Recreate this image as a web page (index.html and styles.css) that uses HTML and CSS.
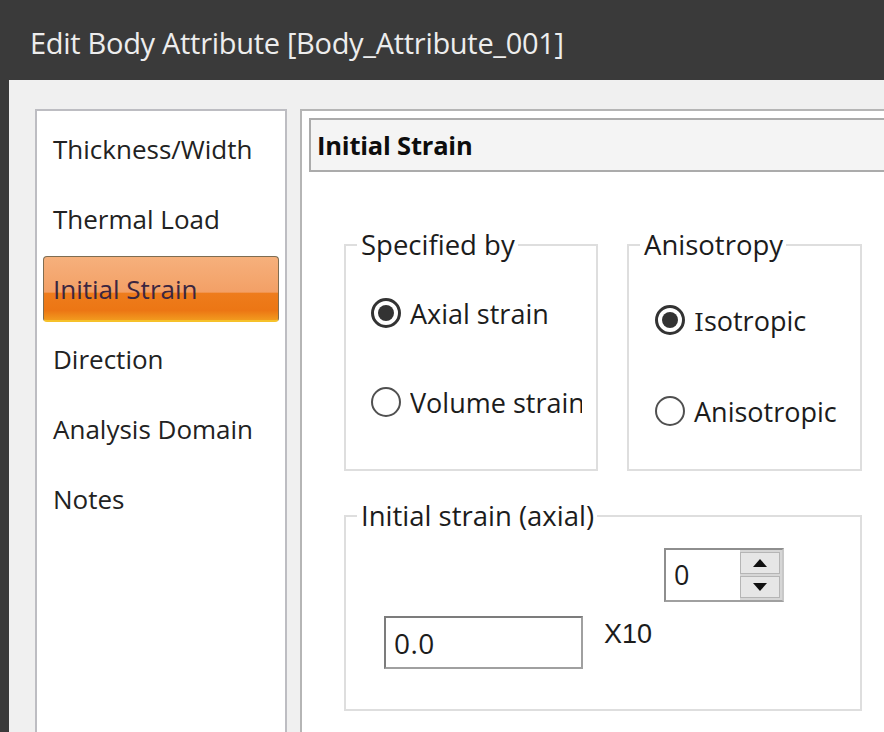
FILE: index.html
```html
<!DOCTYPE html>
<html lang="en">
<head>
<meta charset="utf-8">
<title>Edit Body Attribute</title>
<link rel="stylesheet" href="styles.css">
</head>
<body>
<div class="window">
  <div class="titlebar">Edit Body Attribute [Body_Attribute_001]</div>
  <div class="client">
    <ul class="nav">
      <li class="nav-item">Thickness/Width</li>
      <li class="nav-item">Thermal Load</li>
      <li class="nav-item is-active">Initial Strain</li>
      <li class="nav-item">Direction</li>
      <li class="nav-item">Analysis Domain</li>
      <li class="nav-item">Notes</li>
    </ul>
    <section class="page">
      <header class="page-head">Initial Strain</header>
      <div class="page-body">
        <div class="group-row">
          <fieldset class="group group-spec">
            <legend>Specified by</legend>
            <div class="options options-spec">
              <label class="option"><input type="radio" name="spec" checked><span class="option-text">Axial strain</span></label>
              <label class="option"><input type="radio" name="spec"><span class="option-text clip">Volume strain</span></label>
            </div>
          </fieldset>
          <fieldset class="group group-aniso">
            <legend>Anisotropy</legend>
            <div class="options options-aniso">
              <label class="option"><input type="radio" name="aniso" checked><span class="option-text"><span class="serif-i">I</span>sotropic</span></label>
              <label class="option"><input type="radio" name="aniso"><span class="option-text">Anisotropic</span></label>
            </div>
          </fieldset>
        </div>
        <fieldset class="group group-value">
          <legend>Initial strain (axial)</legend>
          <div class="value-body">
            <div class="spin">
              <span class="spin-field">0</span>
              <span class="spin-buttons">
                <span class="spin-btn"><svg width="16" height="9" viewBox="0 0 16 9"><polygon points="8,0 16,9 0,9" fill="#111"/></svg></span>
                <span class="spin-btn"><svg width="16" height="9" viewBox="0 0 16 9"><polygon points="0,0 16,0 8,9" fill="#111"/></svg></span>
              </span>
            </div>
            <div class="value-row">
              <span class="text-field">0.0</span>
              <span class="exp-label">X10</span>
            </div>
          </div>
        </fieldset>
      </div>
    </section>
  </div>
</div>
</body>
</html>
```

FILE: styles.css
```css
html, body {
  margin: 0;
  padding: 0;
  width: 884px;
  height: 732px;
  overflow: hidden;
  background: #f0f0f0;
  font-family: "Open Sans", "Noto Sans", sans-serif;
  color: #1c1c1c;
}

.window {
  display: flex;
  flex-direction: column;
  height: 732px;
  border-left: 9px solid #3a3a3a;
  box-sizing: border-box;
}

.titlebar {
  height: 80px;
  flex: 0 0 80px;
  margin-left: -9px;
  padding-left: 30px;
  background: #3a3a3a;
  color: #ededed;
  font-size: 29px;
  line-height: 86px;
  letter-spacing: -0.3px;
  box-sizing: border-box;
  white-space: nowrap;
}

.client {
  flex: 1;
  display: flex;
  gap: 13px;
  padding: 29px 0 0 26px;
  min-height: 0;
}

/* left navigation list */
.nav {
  list-style: none;
  margin: 0;
  padding: 5px 6px 0;
  width: 252px;
  flex: 0 0 252px;
  box-sizing: border-box;
  background: #fff;
  border: 2px solid #bdbdc2;
  border-bottom: 0;
  display: flex;
  flex-direction: column;
  gap: 4px;
}

.nav-item {
  height: 66px;
  box-sizing: border-box;
  padding-left: 9px;
  display: flex;
  align-items: center;
  font-size: 26px;
  color: #222;
  border: 1px solid transparent;
  border-radius: 4px;
  white-space: nowrap;
}

.nav-item.is-active {
  border-color: #7e6d52;
  border-bottom: 2px solid #f6c12a;
  background: linear-gradient(to bottom, #f6b07c 0%, #f3a066 56%, #ee7c1c 57%, #ec7614 85%, #f29a1e 100%);
  color: #3b2640;
}

/* right property page */
.page {
  flex: 0 0 600px;
  background: #fff;
  border: 2px solid #b5b5b5;
  border-right: 0;
  border-bottom: 0;
  padding: 7px 0 0 7px;
  box-sizing: border-box;
}

.page-head {
  height: 54px;
  box-sizing: border-box;
  border: 2px solid #ababab;
  border-right: 0;
  background: #f4f4f4;
  padding-left: 6px;
  font-weight: 700;
  font-size: 25.5px;
  line-height: 50px;
  color: #0d0d0d;
  letter-spacing: -0.2px;
}

.page-body {
  padding: 59px 0 0 35px;
}

.group-row {
  display: flex;
  gap: 29px;
}

.group {
  margin: 0;
  padding: 0;
  border: 2px solid #dedede;
  min-width: 0;
}

.group legend {
  margin-left: 11px;
  padding: 0 3px 0 4px;
  font-size: 27.5px;
  line-height: 28px;
  color: #1c1c1c;
  white-space: nowrap;
}

.group-spec { width: 254px; box-sizing: border-box; }
.group-aniso { width: 235px; box-sizing: border-box; }
.group-value { width: 518px; box-sizing: border-box; margin-top: 31px; }

.options {
  height: 210px;
  display: flex;
  flex-direction: column;
  box-sizing: border-box;
}

.options-spec { padding: 34px 0 0 25px; gap: 49px; }
.options-aniso { padding: 41px 0 0 26px; gap: 51px; }

.option {
  height: 40px;
  display: flex;
  align-items: center;
  gap: 9px;
  font-size: 27px;
  color: #1c1c1c;
  white-space: nowrap;
}

.option input {
  appearance: none;
  -webkit-appearance: none;
  margin: 0;
  width: 30px;
  height: 30px;
  flex: 0 0 30px;
  border-radius: 50%;
  border: 2px solid #505050;
  background: #fff;
  box-sizing: border-box;
  display: grid;
  place-items: center;
}

.option input:checked {
  border-color: #333;
  border-width: 3px;
}

.option input:checked::after {
  content: "";
  width: 16px;
  height: 16px;
  border-radius: 50%;
  background: #333;
}

.option-text.clip {
  display: inline-block;
  width: 172px;
  overflow: hidden;
  white-space: nowrap;
}

.serif-i {
  font-family: "DejaVu Serif", serif;
  font-size: 25px;
}

/* value entry */
.value-body {
  height: 179px;
  box-sizing: border-box;
  padding: 18px 0 0 0;
}

.spin {
  margin-left: 318px;
  width: 120px;
  height: 54px;
  box-sizing: border-box;
  display: flex;
  border: 2px solid #8e8e8e;
  border-right-color: #c8c8c8;
  border-bottom-color: #a0a0a0;
  background: #fff;
}

.spin-field {
  flex: 1;
  padding-left: 8px;
  font-size: 27px;
  line-height: 50px;
  color: #1c1c1c;
}

.spin-buttons {
  width: 42px;
  display: flex;
  flex-direction: column;
  gap: 2px;
  padding: 2px 2px 2px 0;
  background: #d6d6d6;
  box-sizing: border-box;
}

.spin-btn {
  flex: 1;
  background: #e6e6e6;
  border: 1px solid #b5b5b5;
  display: grid;
  place-items: center;
}

.spin-btn svg { width: 14px; height: 8px; }

.value-row {
  display: flex;
  align-items: flex-start;
  margin-top: 14px;
  margin-left: 38px;
  gap: 21px;
}

.text-field {
  width: 199px;
  height: 53px;
  box-sizing: border-box;
  border: 2px solid #7c7c7c;
  border-right-color: #a0a0a0;
  border-bottom-color: #a0a0a0;
  padding-left: 8px;
  font-size: 28px;
  letter-spacing: 0.5px;
  line-height: 51px;
  color: #1c1c1c;
}

.exp-label {
  margin-top: 4px;
  font-family: "Liberation Sans", Arial, sans-serif;
  font-size: 27px;
  line-height: 28px;
  color: #1c1c1c;
}
```
